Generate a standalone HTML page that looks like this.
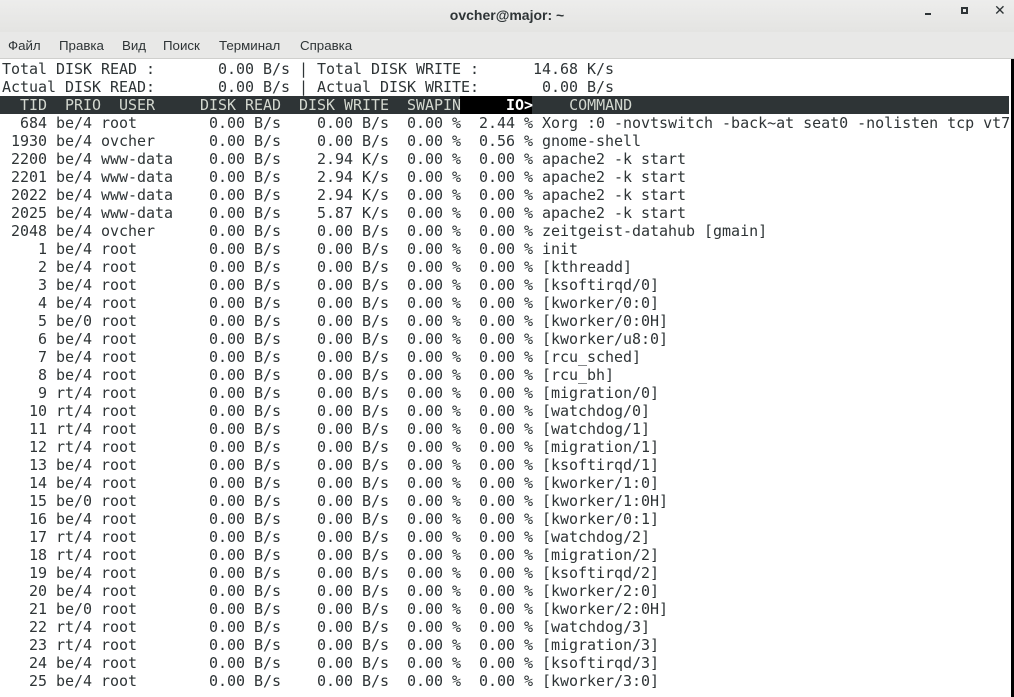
<!DOCTYPE html>
<html><head><meta charset="utf-8"><style>
*{margin:0;padding:0;box-sizing:border-box}
body{width:1014px;height:697px;overflow:hidden;background:#fff;position:relative;font-family:"Liberation Sans","DejaVu Sans",sans-serif}
#title{position:absolute;left:0;top:0;width:1014px;height:32px;background:linear-gradient(#ededec,#e4e4e2);}
#title .t{position:absolute;top:7px;width:100%;text-align:center;font-size:14px;font-weight:bold;color:#2e3436}
#menu{position:absolute;left:0;top:32px;width:1014px;height:27px;background:#e8e8e7;border-bottom:1px solid #cfcfcd;font-size:13.3px;color:#2e3436}
#menu span{position:absolute;top:6px}
#term{position:absolute;left:2px;top:60px;font-family:"DejaVu Sans Mono","Liberation Mono",monospace;font-size:15px;letter-spacing:-0.03px;line-height:18px;color:#2e3436;white-space:pre}
#hdr{position:absolute;left:0;top:96px;width:1009px;height:18px;background:#2e3436}
#io{position:absolute;left:460px;top:96px;width:72px;height:18px;background:#000}
#term .h{color:#d3d7cf}
#term b{color:#fff}
#vbar{position:absolute;left:1011px;top:59px;width:3px;height:638px;background:#000}
</style></head><body>
<div id="title"><div class="t">ovcher@major: ~</div>
<div style="position:absolute;left:925px;top:13px;width:6px;height:2px;background:#2e3436"></div>
<div style="position:absolute;left:961px;top:7px;width:7px;height:7px;border:2px solid #2e3436"></div>
<div style="position:absolute;left:994px;top:2px;font-size:14px;font-weight:bold;color:#2e3436">✕</div>
</div>
<div id="menu"><span style="left:8px">Файл</span><span style="left:59px">Правка</span><span style="left:122px">Вид</span><span style="left:163px">Поиск</span><span style="left:219px">Терминал</span><span style="left:300px">Справка</span></div>
<div id="hdr"></div><div id="io"></div>
<div id="term">Total DISK READ :       0.00 B/s | Total DISK WRITE :      14.68 K/s
Actual DISK READ:       0.00 B/s | Actual DISK WRITE:       0.00 B/s
<span class="h">  TID  PRIO  USER     DISK READ  DISK WRITE  SWAPIN     </span><b>IO&gt;</b><span class="h">    COMMAND</span>
  684 be/4 root        0.00 B/s    0.00 B/s  0.00 %  2.44 % Xorg :0 -novtswitch -back~at seat0 -nolisten tcp vt7
 1930 be/4 ovcher      0.00 B/s    0.00 B/s  0.00 %  0.56 % gnome-shell
 2200 be/4 www-data    0.00 B/s    2.94 K/s  0.00 %  0.00 % apache2 -k start
 2201 be/4 www-data    0.00 B/s    2.94 K/s  0.00 %  0.00 % apache2 -k start
 2022 be/4 www-data    0.00 B/s    2.94 K/s  0.00 %  0.00 % apache2 -k start
 2025 be/4 www-data    0.00 B/s    5.87 K/s  0.00 %  0.00 % apache2 -k start
 2048 be/4 ovcher      0.00 B/s    0.00 B/s  0.00 %  0.00 % zeitgeist-datahub [gmain]
    1 be/4 root        0.00 B/s    0.00 B/s  0.00 %  0.00 % init
    2 be/4 root        0.00 B/s    0.00 B/s  0.00 %  0.00 % [kthreadd]
    3 be/4 root        0.00 B/s    0.00 B/s  0.00 %  0.00 % [ksoftirqd/0]
    4 be/4 root        0.00 B/s    0.00 B/s  0.00 %  0.00 % [kworker/0:0]
    5 be/0 root        0.00 B/s    0.00 B/s  0.00 %  0.00 % [kworker/0:0H]
    6 be/4 root        0.00 B/s    0.00 B/s  0.00 %  0.00 % [kworker/u8:0]
    7 be/4 root        0.00 B/s    0.00 B/s  0.00 %  0.00 % [rcu_sched]
    8 be/4 root        0.00 B/s    0.00 B/s  0.00 %  0.00 % [rcu_bh]
    9 rt/4 root        0.00 B/s    0.00 B/s  0.00 %  0.00 % [migration/0]
   10 rt/4 root        0.00 B/s    0.00 B/s  0.00 %  0.00 % [watchdog/0]
   11 rt/4 root        0.00 B/s    0.00 B/s  0.00 %  0.00 % [watchdog/1]
   12 rt/4 root        0.00 B/s    0.00 B/s  0.00 %  0.00 % [migration/1]
   13 be/4 root        0.00 B/s    0.00 B/s  0.00 %  0.00 % [ksoftirqd/1]
   14 be/4 root        0.00 B/s    0.00 B/s  0.00 %  0.00 % [kworker/1:0]
   15 be/0 root        0.00 B/s    0.00 B/s  0.00 %  0.00 % [kworker/1:0H]
   16 be/4 root        0.00 B/s    0.00 B/s  0.00 %  0.00 % [kworker/0:1]
   17 rt/4 root        0.00 B/s    0.00 B/s  0.00 %  0.00 % [watchdog/2]
   18 rt/4 root        0.00 B/s    0.00 B/s  0.00 %  0.00 % [migration/2]
   19 be/4 root        0.00 B/s    0.00 B/s  0.00 %  0.00 % [ksoftirqd/2]
   20 be/4 root        0.00 B/s    0.00 B/s  0.00 %  0.00 % [kworker/2:0]
   21 be/0 root        0.00 B/s    0.00 B/s  0.00 %  0.00 % [kworker/2:0H]
   22 rt/4 root        0.00 B/s    0.00 B/s  0.00 %  0.00 % [watchdog/3]
   23 rt/4 root        0.00 B/s    0.00 B/s  0.00 %  0.00 % [migration/3]
   24 be/4 root        0.00 B/s    0.00 B/s  0.00 %  0.00 % [ksoftirqd/3]
   25 be/4 root        0.00 B/s    0.00 B/s  0.00 %  0.00 % [kworker/3:0]</div>
<div id="vbar"></div>
</body></html>
